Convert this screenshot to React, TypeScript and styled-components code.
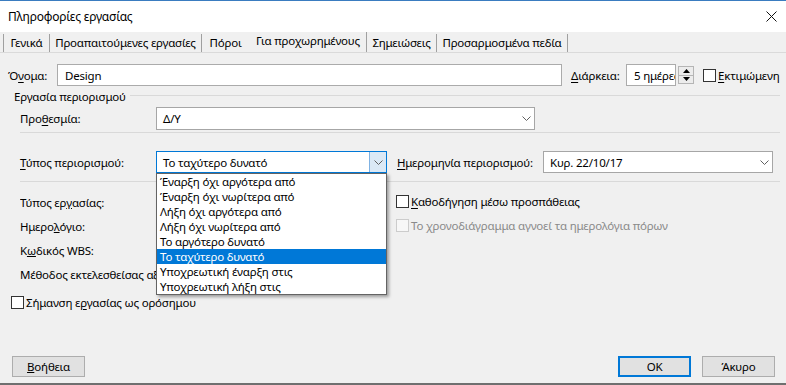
import React from 'react'
import styled, { createGlobalStyle } from 'styled-components'

const GlobalStyle = createGlobalStyle`
  html, body {
    margin: 0;
    padding: 0;
    background: #f0f0f0;
  }
  * {
    box-sizing: border-box;
  }
  body {
    font-family: 'Noto Sans', 'Open Sans', sans-serif;
    font-size: 11.5px;
    letter-spacing: -0.2px;
    color: #000;
  }
`

const Window = styled.div`
  width: 786px;
  height: 385px;
  display: flex;
  flex-direction: column;
  background: #f0f0f0;
  border-top: 1px solid #3a7cc0;
  border-bottom: 2px solid #6f6f6f;
  overflow: hidden;
`

const TitleBar = styled.div`
  height: 31px;
  background: #fff;
  display: flex;
  align-items: center;
  justify-content: space-between;
  padding: 0 8px;
  font-size: 12px;
`

const CloseBtn = styled.div`
  width: 12px;
  height: 12px;
  display: flex;
  align-items: center;
  justify-content: center;
  margin-right: 1px;
`

const TabStrip = styled.div`
  height: 21px;
  display: flex;
  align-items: flex-end;
  padding-left: 3px;
  border-bottom: 1px solid #dadada;
`

const Tab = styled.div<{ w: number; sep?: boolean; first?: boolean; active?: boolean }>`
  width: ${(p) => p.w}px;
  height: ${(p) => (p.active ? 20 : 18)}px;
  display: flex;
  align-items: center;
  justify-content: center;
  padding-bottom: ${(p) => (p.active ? 3 : 1)}px;
  border-right: 1px solid ${(p) => (p.sep ? '#a0a0a0' : 'transparent')};
  border-left: ${(p) => (p.first ? '1px solid #a0a0a0' : 'none')};
  white-space: nowrap;
`

const Content = styled.div`
  flex: 1;
  display: flex;
  flex-direction: column;
  padding: 0 6px 0 8px;
`

const Row = styled.div<{ top: number; h?: number; indent?: number }>`
  display: flex;
  align-items: center;
  height: ${(p) => p.h ?? 22}px;
  margin-top: ${(p) => p.top}px;
  padding-left: ${(p) => p.indent ?? 0}px;
`

const Label = styled.span<{ w?: number; disabled?: boolean }>`
  width: ${(p) => (p.w ? `${p.w}px` : 'auto')};
  flex-shrink: 0;
  white-space: nowrap;
  color: ${(p) => (p.disabled ? '#8a8a8a' : '#000')};
  u {
    text-decoration-thickness: 1px;
    text-underline-offset: 2px;
  }
`

const TextBox = styled.div<{ w: number }>`
  width: ${(p) => p.w}px;
  height: 100%;
  background: #fff;
  border: 1px solid #ababab;
  display: flex;
  align-items: center;
  padding-left: 7px;
  overflow: hidden;
  white-space: nowrap;
`

const SelectWrap = styled.div<{ w: number }>`
  position: relative;
  width: ${(p) => p.w}px;
  height: 100%;
  flex-shrink: 0;
`

const SelectBox = styled.div<{ focused?: boolean }>`
  height: 100%;
  background: #fff;
  border: 1px solid ${(p) => (p.focused ? '#0078d7' : '#a6a6a6')};
  display: flex;
  align-items: center;
  padding-left: 6px;
  white-space: nowrap;
`

const SelectText = styled.span`
  flex: 1;
`

const SelectArrow = styled.div<{ focused?: boolean }>`
  width: 17px;
  height: 100%;
  display: flex;
  align-items: center;
  justify-content: center;
  background: ${(p) => (p.focused ? '#dbe9f6' : 'transparent')};
  border-left: 1px solid ${(p) => (p.focused ? '#7fb2e3' : 'transparent')};
`

const ListBox = styled.div`
  position: absolute;
  top: 100%;
  left: 0;
  width: 231px;
  background: #fff;
  border: 1px solid #646464;
  box-shadow: 2px 2px 3px rgba(0, 0, 0, 0.35);
  z-index: 5;
  padding: 0;
`

const ListItem = styled.div<{ selected?: boolean }>`
  height: 15px;
  line-height: 15px;
  padding-left: 3px;
  white-space: nowrap;
  background: ${(p) => (p.selected ? '#0078d7' : '#fff')};
  color: ${(p) => (p.selected ? '#fff' : '#000')};
`

const Spinner = styled.div`
  width: 16px;
  height: 18px;
  display: flex;
  flex-direction: column;
  border: 1px solid #b5b5b5;
  background: #ececec;
  margin-left: 2px;
`

const SpinHalf = styled.div<{ down?: boolean }>`
  flex: 1;
  display: flex;
  align-items: center;
  justify-content: center;
  border-top: ${(p) => (p.down ? '1px solid #b5b5b5' : 'none')};
`

const CheckBox = styled.div<{ disabled?: boolean }>`
  width: 13px;
  height: 13px;
  flex-shrink: 0;
  background: ${(p) => (p.disabled ? '#f7f7f7' : '#fff')};
  border: 1px solid ${(p) => (p.disabled ? '#cccccc' : '#333')};
  margin-right: 2px;
`

const GroupHeader = styled.div`
  display: flex;
  align-items: center;
  height: 14px;
  margin-top: 3px;
  padding-left: 6px;
`

const Rule = styled.div<{ top: number; left?: number }>`
  height: 1px;
  background: #d9d9d9;
  margin-top: ${(p) => p.top}px;
  margin-left: ${(p) => p.left ?? 0}px;
`

const GroupLine = styled.div`
  flex: 1;
  height: 1px;
  background: #d9d9d9;
  margin-left: 4px;
  margin-top: -2px;
`

const Lower = styled.div`
  display: grid;
  grid-template-columns: 388px 1fr;
  margin-top: 12px;
`

const LeftCol = styled.div`
  display: flex;
  flex-direction: column;
  width: 136px;
  margin-left: 12px;
  overflow: hidden;
  gap: 10px;
`

const RightCol = styled.div`
  display: flex;
  flex-direction: column;
  gap: 10px;
`

const FieldLine = styled.div`
  height: 14px;
  display: flex;
  align-items: center;
  white-space: nowrap;
`

const CheckRow = styled.div<{ top?: number }>`
  display: flex;
  align-items: center;
  height: 14px;
  margin-top: ${(p) => p.top ?? 0}px;
  white-space: nowrap;
`

const Buttons = styled.div`
  margin-top: auto;
  display: flex;
  align-items: center;
  padding: 0 5px 6px 4px;
  gap: 11px;
`

const Button = styled.div<{ focused?: boolean }>`
  width: 73px;
  height: 21px;
  display: flex;
  align-items: center;
  justify-content: center;
  background: #e1e1e1;
  border: ${(p) => (p.focused ? '2px solid #0078d7' : '1px solid #adadad')};
  &:first-child {
    margin-right: auto;
  }
`

const Chevron = () => (
  <svg width="9" height="5" viewBox="0 0 9 5">
    <path d="M0.5 0.5 L4.5 4.5 L8.5 0.5" fill="none" stroke="#606060" strokeWidth="1" />
  </svg>
)

const Triangle = ({ down }: { down?: boolean }) => (
  <svg width="7" height="4" viewBox="0 0 7 4">
    <path d={down ? 'M0 0 H7 L3.5 4 Z' : 'M0 4 H7 L3.5 0 Z'} fill="#000" />
  </svg>
)

const Select = ({ w, value, focused, children }: { w: number; value: string; focused?: boolean; children?: React.ReactNode }) => (
  <SelectWrap w={w}>
    <SelectBox focused={focused}>
      <SelectText>{value}</SelectText>
      <SelectArrow focused={focused}>
        <Chevron />
      </SelectArrow>
    </SelectBox>
    {children}
  </SelectWrap>
)

const constraints = [
  'Έναρξη όχι αργότερα από',
  'Έναρξη όχι νωρίτερα από',
  'Λήξη όχι αργότερα από',
  'Λήξη όχι νωρίτερα από',
  'Το αργότερο δυνατό',
  'Το ταχύτερο δυνατό',
  'Υποχρεωτική έναρξη στις',
  'Υποχρεωτική λήξη στις',
]

const tabs = [
  { label: 'Γενικά', w: 47, sep: true },
  { label: 'Προαπαιτούμενες εργασίες', w: 152, sep: true },
  { label: 'Πόροι', w: 48, sep: false },
  { label: 'Για προχωρημένους', w: 117, sep: true, active: true },
  { label: 'Σημειώσεις', w: 70, sep: true },
  { label: 'Προσαρμοσμένα πεδία', w: 131, sep: true },
]

export default function App() {
  return (
    <>
      <GlobalStyle />
      <Window>
        <TitleBar>
          <span>Πληροφορίες εργασίας</span>
          <CloseBtn>
            <svg width="11" height="11" viewBox="0 0 11 11">
              <path d="M0.5 0.5 L10.5 10.5 M10.5 0.5 L0.5 10.5" stroke="#111" strokeWidth="1" />
            </svg>
          </CloseBtn>
        </TitleBar>
        <TabStrip>
          {tabs.map((t, i) => (
            <Tab key={t.label} w={t.w} sep={t.sep} first={i === 0} active={t.active}>
              {t.label}
            </Tab>
          ))}
        </TabStrip>
        <Content>
          <Row top={11}>
            <Label w={49}>
              Ό<u>ν</u>ομα:
            </Label>
            <TextBox w={505}>Design</TextBox>
            <Label w={55} style={{ marginLeft: 9 }}>
              <u>Δ</u>ιάρκεια:
            </Label>
            <TextBox w={50}>5 ημέρες</TextBox>
            <Spinner>
              <SpinHalf>
                <Triangle />
              </SpinHalf>
              <SpinHalf down>
                <Triangle down />
              </SpinHalf>
            </Spinner>
            <CheckBox style={{ marginLeft: 9 }} />
            <Label>
              <u>Ε</u>κτιμώμενη
            </Label>
          </Row>
          <GroupHeader>
            <Label>Εργασία περιορισμού</Label>
            <GroupLine />
          </GroupHeader>
          <Row top={4} h={23} indent={12}>
            <Label w={136}>
              Προ<u>θ</u>εσμία:
            </Label>
            <Select w={379} value="Δ/Υ" />
          </Row>
          <Rule top={2} left={12} />
          <Row top={18} indent={12}>
            <Label w={136}>
              <u>Τ</u>ύπος περιορισμού:
            </Label>
            <Select w={231} value="Το ταχύτερο δυνατό" focused>
              <ListBox>
                {constraints.map((c) => (
                  <ListItem key={c} selected={c === 'Το ταχύτερο δυνατό'}>
                    {c}
                  </ListItem>
                ))}
              </ListBox>
            </Select>
            <Label w={146} style={{ marginLeft: 10 }}>
              <u>Η</u>μερομηνία περιορισμού:
            </Label>
            <Select w={230} value="Κυρ. 22/10/17" />
          </Row>
          <Rule top={8} left={12} />
          <Lower>
            <LeftCol>
              <FieldLine style={{ marginTop: 1 }}>
                Τύπος ερ<u>γ</u>ασίας:
              </FieldLine>
              <FieldLine>
                Ημερο<u>λ</u>όγιο:
              </FieldLine>
              <FieldLine>
                Κ<u>ω</u>δικός WBS:
              </FieldLine>
              <FieldLine>Μέθοδος εκτελεσθείσας αξίας:</FieldLine>
            </LeftCol>
            <RightCol>
              <CheckRow>
                <CheckBox />
                <Label>
                  <u>Κ</u>αθοδήγηση μέσω προσπάθειας
                </Label>
              </CheckRow>
              <CheckRow>
                <CheckBox disabled />
                <Label disabled>
                  Το <u>χ</u>ρονοδιάγραμμα αγνοεί τα ημερολόγια πόρων
                </Label>
              </CheckRow>
            </RightCol>
          </Lower>
          <CheckRow top={14} style={{ paddingLeft: 3 }}>
            <CheckBox />
            <Label>
              Σήμανση ε<u>ρ</u>γασίας ως ορόσημου
            </Label>
          </CheckRow>
          <Buttons>
            <Button>
              <u>Β</u>οήθεια
            </Button>
            <Button focused>OK</Button>
            <Button>Άκυρο</Button>
          </Buttons>
        </Content>
      </Window>
    </>
  )
}
